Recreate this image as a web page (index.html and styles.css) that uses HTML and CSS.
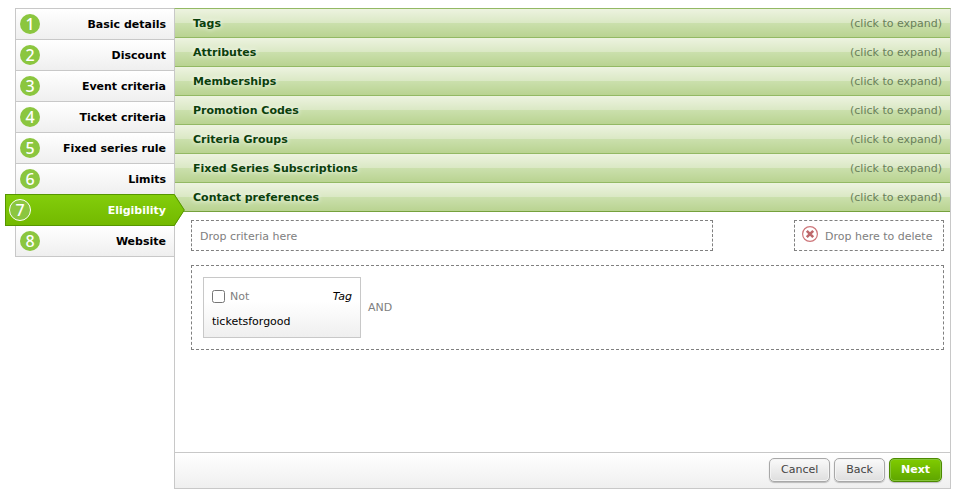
FILE: index.html
```html
<!DOCTYPE html>
<html lang="en">
<head>
<meta charset="utf-8">
<title>Eligibility</title>
<link rel="stylesheet" href="styles.css">
</head>
<body>
<div class="wizard">
  <nav class="steps">
    <a class="step" href="#"><span class="num">1</span>Basic details</a>
    <a class="step" href="#"><span class="num">2</span>Discount</a>
    <a class="step" href="#"><span class="num">3</span>Event criteria</a>
    <a class="step" href="#"><span class="num">4</span>Ticket criteria</a>
    <a class="step" href="#"><span class="num">5</span>Fixed series rule</a>
    <a class="step" href="#"><span class="num">6</span>Limits</a>
    <a class="step active" href="#" aria-current="step"><span class="num">7</span>Eligibility
      <svg class="arrow" width="11" height="32" viewBox="0 0 11 32" aria-hidden="true">
        <defs><linearGradient id="tip" x1="0" y1="0" x2="0" y2="1"><stop offset="0" stop-color="#83cd0b"/><stop offset="1" stop-color="#73b900"/></linearGradient></defs>
        <path d="M0 0H.5L10.5 16L.5 32H0Z" fill="url(#tip)"/>
        <path d="M0 .2L10.3 16L0 31.8" fill="none" stroke="#569600"/>
      </svg>
    </a>
    <a class="step" href="#"><span class="num">8</span>Website</a>
  </nav>
  <main class="panel">
    <div class="accordion">
      <button class="section" type="button"><b>Tags</b><span>(click to expand)</span></button>
      <button class="section" type="button"><b>Attributes</b><span>(click to expand)</span></button>
      <button class="section" type="button"><b>Memberships</b><span>(click to expand)</span></button>
      <button class="section" type="button"><b>Promotion Codes</b><span>(click to expand)</span></button>
      <button class="section" type="button"><b>Criteria Groups</b><span>(click to expand)</span></button>
      <button class="section" type="button"><b>Fixed Series Subscriptions</b><span>(click to expand)</span></button>
      <button class="section" type="button"><b>Contact preferences</b><span>(click to expand)</span></button>
    </div>
    <div class="workspace">
      <div class="drops">
        <div class="drop criteria">Drop criteria here</div>
        <div class="drop trash">
          <svg class="cross" width="16" height="16" viewBox="0 0 16 16" aria-hidden="true">
            <circle cx="8" cy="8" r="7.4" fill="#fff" stroke="#cd7579" stroke-width="1.2"/>
            <path d="M4.8 4.8L11.2 11.2M11.2 4.8L4.8 11.2" stroke="#bd686b" stroke-width="2.6"/>
          </svg>
          Drop here to delete
        </div>
      </div>
      <div class="group">
        <div class="card">
          <div class="card-head">
            <label class="not"><input type="checkbox">Not</label>
            <em>Tag</em>
          </div>
          <div>ticketsforgood</div>
        </div>
        <span class="operator">AND</span>
      </div>
    </div>
    <div class="footer">
      <button class="btn" type="button">Cancel</button>
      <button class="btn" type="button">Back</button>
      <button class="btn primary" type="button">Next</button>
    </div>
  </main>
</div>
</body>
</html>
```
FILE: styles.css
```css
* {
  box-sizing: border-box;
}

body {
  margin: 0;
  padding: 8px 7px 3px 15px;
  background: #fff;
  color: #000;
  font: 11px/15px Verdana, "DejaVu Sans", sans-serif;
}

button {
  font: inherit;
  cursor: pointer;
}

.wizard {
  display: flex;
  align-items: stretch;
}

.steps {
  flex: 0 0 159px;
}

.step {
  position: relative;
  display: flex;
  align-items: center;
  justify-content: space-between;
  height: 31px;
  padding: 0 8px 0 4px;
  border: solid #c8c8c8;
  border-width: 1px 0 0 1px;
  background: linear-gradient(#fff, #efefef);
  color: #000;
  font-weight: bold;
  text-decoration: none;
}

.step:last-child {
  height: 32px;
  border-bottom-width: 1px;
}

.num {
  width: 20px;
  height: 20px;
  border-radius: 50%;
  background: #8bc63f;
  color: #fff;
  font: 500 16px/20px "Noto Sans", sans-serif;
  text-align: center;
}

.active {
  z-index: 1;
  height: 32px;
  margin: 0 0 -1px -10px;
  padding-left: 3px;
  border-color: #569600;
  border-width: 1px 0 1px 1px;
  background: linear-gradient(#83cd0b, #73b900);
  color: #fff;
}

.active .num {
  width: 22px;
  height: 22px;
  border: 1px solid #fff;
}

.arrow {
  position: absolute;
  top: -1px;
  left: 100%;
}

.panel {
  display: flex;
  flex: 1;
  flex-direction: column;
  min-width: 0;
  min-height: 481px;
  border: 1px solid #c8c8c8;
  border-top-color: #93b964;
}

.section {
  display: flex;
  align-items: center;
  justify-content: space-between;
  width: 100%;
  height: 29px;
  padding: 0 8px 0 18px;
  border: 0;
  border-bottom: 1px solid #93b964;
  background: linear-gradient(#edf3e0, #dae8c4 50%, #cbe0ad 50%, #b9d391);
  color: #69805a;
}

.section:last-child {
  border-bottom-color: #75a13c;
}

.section b {
  color: #0b400b;
  text-shadow: 0 0 5px #fff;
}

.workspace {
  flex: 1;
  padding: 8px 6px 8px 16px;
  color: #808080;
}

.drops {
  display: flex;
  justify-content: space-between;
  margin-bottom: 14px;
}

.drop {
  display: flex;
  align-items: center;
  height: 31px;
  padding: 2px 8px 0;
  border: 1px dashed #808080;
}

.criteria {
  flex: 0 0 522px;
}

.trash {
  flex: 0 0 150px;
  gap: 7px;
  padding: 2px 7px 0;
  white-space: nowrap;
}

.cross {
  flex: none;
  margin-bottom: 6px;
}

.group {
  display: flex;
  align-items: center;
  gap: 7px;
  padding: 11px;
  border: 1px dashed #808080;
}

.card {
  width: 158px;
  padding: 11px 8px 8px;
  border: 1px solid #c8c8c8;
  background: linear-gradient(#fff 40%, #efefef);
  color: #000;
}

.card-head {
  display: flex;
  justify-content: space-between;
  margin-bottom: 10px;
}

.not {
  display: flex;
  align-items: center;
  gap: 5px;
  color: #808080;
}

.not input {
  width: 13px;
  height: 13px;
  margin: 0;
}

.footer {
  display: flex;
  align-items: center;
  justify-content: flex-end;
  gap: 4px;
  height: 36px;
  padding: 0 8px 2px;
  border-top: 1px solid #c8c8c8;
  background: linear-gradient(#fff, #efefef);
}

.btn {
  height: 24px;
  padding: 0 11px;
  border: 1px solid #a8a8a8;
  border-radius: 5px;
  background: linear-gradient(#fafafa, #dedede);
  box-shadow: inset 0 0 0 1px #f4f4f4, 0 1px 1px #bbb;
  color: #444;
}

.primary {
  border-color: #4c8a00;
  background: linear-gradient(#80cc00, #5ea500);
  box-shadow: inset 0 0 0 1px #86c63a, 0 1px 1px #bbb;
  color: #fff;
  font-weight: bold;
}
```
